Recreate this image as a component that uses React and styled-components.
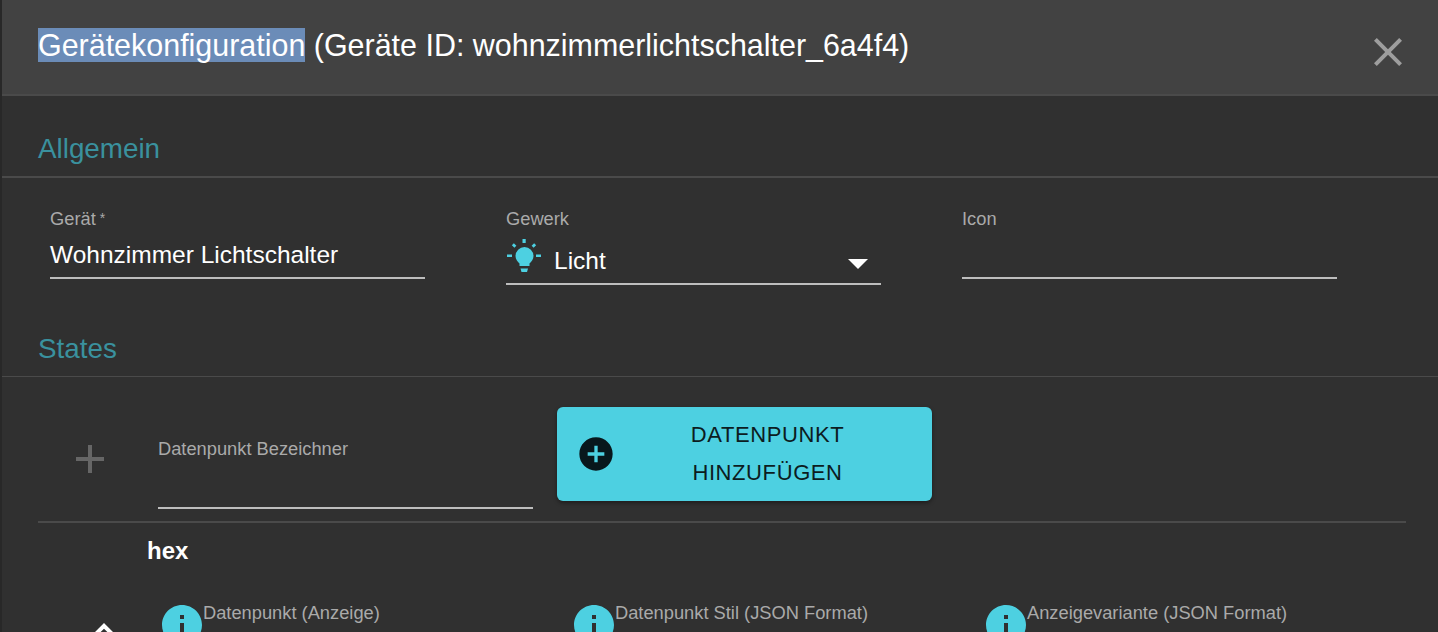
import React from "react";
import styled, { createGlobalStyle } from "styled-components";

const GlobalStyle = createGlobalStyle`
  html, body {
    margin: 0;
    height: 632px;
    overflow: hidden;
    background: #303030;
    font-family: "Liberation Sans", Arial, sans-serif;
  }
`;

const Dialog = styled.div`
  box-sizing: border-box;
  width: 1438px;
  height: 632px;
  overflow: hidden;
  background: #303030;
  border-left: 2px solid #282828;
`;

const Header = styled.header`
  box-sizing: border-box;
  height: 96px;
  display: flex;
  justify-content: space-between;
  align-items: flex-start;
  padding: 28px 26px 0 36px;
  background: #424242;
  border-bottom: 2px solid #4a4a4a;
`;

const Title = styled.h2`
  margin: 0;
  font-size: 30.45px;
  font-weight: 400;
  line-height: 34px;
  color: #fff;
  white-space: nowrap;
`;

const Selected = styled.span`
  background: #6b8cb8;
`;

const CloseIcon = styled.svg`
  width: 48px;
  height: 48px;
  fill: #9e9e9e;
`;

const SectionTitle = styled.h3`
  margin: 0;
  padding: 36px 36px 10px;
  font-size: 27.8px;
  font-weight: 400;
  line-height: 34px;
  color: #3a919e;
  border-bottom: ${(props) => (props.$thin ? "1px" : "2px")} solid #4a4a4a;
`;

const FieldRow = styled.div`
  display: grid;
  grid-template-columns: repeat(3, 375px);
  column-gap: 81px;
  align-items: start;
  padding: 31px 0 11px 48px;
`;

const Field = styled.div`
  width: 375px;
`;

const Label = styled.label`
  display: block;
  font-size: 18.3px;
  line-height: 20px;
  color: #aaa;
  white-space: nowrap;
`;

const Required = styled.span`
  margin-left: 4px;
  font-size: 14px;
  line-height: 0;
  vertical-align: 2px;
`;

const Input = styled.div`
  box-sizing: content-box;
  height: 48px;
  font-size: 24.5px;
  line-height: 52px;
  color: #fff;
  border-bottom: 2px solid #bdbdbd;
`;

const Select = styled.div`
  box-sizing: border-box;
  display: flex;
  align-items: flex-start;
  height: 56px;
  padding-top: 10px;
  border-bottom: 2px solid #bdbdbd;
`;

const SelectValue = styled.span`
  margin-left: 12px;
  font-size: 24.5px;
  line-height: 44px;
  color: #fff;
`;

const BulbIcon = styled.svg`
  flex-shrink: 0;
  width: 36px;
  height: 36px;
  margin-top: -1px;
  fill: #4dd0e1;
`;

const ArrowIcon = styled.svg`
  width: 48px;
  height: 48px;
  margin-left: auto;
  margin-right: -1px;
  fill: #fff;
`;

const AddRow = styled.div`
  display: flex;
  align-items: flex-start;
  padding: 30px 0 12px 64px;
`;

const AddIcon = styled.svg`
  flex-shrink: 0;
  width: 48px;
  height: 48px;
  margin: 28px 44px 0 0;
  fill: #666;
`;

const AddField = styled(Field)`
  margin-top: 32px;
`;

const AddButton = styled.button`
  position: relative;
  display: flex;
  align-items: center;
  width: 375px;
  height: 94px;
  margin-left: 24px;
  padding: 0 13px 0 19px;
  border: 0;
  border-radius: 6px;
  background: #4dd0e1;
  box-shadow: 0 2px 4px rgba(0, 0, 0, 0.4);
  color: #0c1c21;
  font-family: inherit;
  font-size: 22px;
  letter-spacing: 0.6px;
  line-height: 38px;
`;

const ButtonIcon = styled.svg`
  flex-shrink: 0;
  width: 40px;
  height: 40px;
  fill: #08171c;
`;

const ButtonText = styled.span`
  flex: 1;
  text-align: center;
`;

const Divider = styled.hr`
  margin: 0 32px 0 36px;
  border: 0;
  border-top: 2px solid #4a4a4a;
`;

const StateName = styled.div`
  padding: 14px 0 0 145px;
  font-size: 24px;
  font-weight: 700;
  line-height: 28px;
  color: #fff;
`;

const StateRow = styled.div`
  display: flex;
  align-items: flex-start;
  padding: 36px 0 0 78px;
`;

const CollapseIcon = styled.svg`
  flex-shrink: 0;
  width: 48px;
  height: 48px;
  margin: 6px 30px 0 0;
  fill: #fff;
`;

const StateField = styled.div`
  display: flex;
  align-items: flex-start;
  width: 412px;
`;

const InfoIcon = styled.svg`
  flex-shrink: 0;
  width: 48px;
  height: 48px;
  fill: #4dd0e1;
`;

const StateLabel = styled(Label)`
  margin: 2px 0 0 -3px;
`;

const stateFields = [
  "Datenpunkt (Anzeige)",
  "Datenpunkt Stil (JSON Format)",
  "Anzeigevariante (JSON Format)",
];

const App = () => {
  return (
    <Dialog>
      <GlobalStyle />
      <Header>
        <Title>
          <Selected>Gerätekonfiguration</Selected> (Geräte ID: wohnzimmerlichtschalter_6a4f4)
        </Title>
        <CloseIcon viewBox="0 0 24 24">
          <path d="M19 6.41 17.59 5 12 10.59 6.41 5 5 6.41 10.59 12 5 17.59 6.41 19 12 13.41 17.59 19 19 17.59 13.41 12z" />
        </CloseIcon>
      </Header>

      <SectionTitle>Allgemein</SectionTitle>
      <FieldRow>
        <Field>
          <Label>
            Gerät<Required>*</Required>
          </Label>
          <Input>Wohnzimmer Lichtschalter</Input>
        </Field>
        <Field>
          <Label>Gewerk</Label>
          <Select>
            <BulbIcon viewBox="0 0 36 36">
              <path d="M18.500 9a9 9 0 0 0-9 9c0 3.500 2 5.500 4 7.500v2.500h10v-2.500c2-2 4-4 4-7.500a9 9 0 0 0-9-9z" />
              <path d="M14.500 30.500h7.500l-1 3.500h-5.500z" />
              <rect x="16.500" y="1" width="3.200" height="4" />
              <rect x="1" y="16.500" width="5" height="2.500" />
              <rect x="30" y="16.500" width="5" height="2.500" />
              <path d="M5.900 7.300 7.900 5.200l2.500 2.500-2 2.100z" />
              <path d="M30.100 7.300 28.100 5.200l-2.500 2.500 2 2.100z" />
            </BulbIcon>
            <SelectValue>Licht</SelectValue>
            <ArrowIcon viewBox="0 0 24 24">
              <path d="M7 10l5 5 5-5z" />
            </ArrowIcon>
          </Select>
        </Field>
        <Field>
          <Label>Icon</Label>
          <Input />
        </Field>
      </FieldRow>

      <SectionTitle $thin>States</SectionTitle>
      <AddRow>
        <AddIcon viewBox="0 0 24 24">
          <path d="M19 13h-6v6h-2v-6H5v-2h6V5h2v6h6v2z" />
        </AddIcon>
        <AddField>
          <Label>Datenpunkt Bezeichner</Label>
          <Input />
        </AddField>
        <AddButton>
          <ButtonIcon viewBox="0 0 24 24">
            <path d="M12 2C6.480 2 2 6.480 2 12s4.480 10 10 10 10-4.480 10-10S17.520 2 12 2zm5 11h-4v4h-2v-4H7v-2h4V7h2v4h4v2z" />
          </ButtonIcon>
          <ButtonText>
            DATENPUNKT
            <br />
            HINZUFÜGEN
          </ButtonText>
        </AddButton>
      </AddRow>
      <Divider />

      <StateName>hex</StateName>
      <StateRow>
        <CollapseIcon viewBox="0 0 24 24">
          <path d="M12 8l-6 6 1.410 1.410L12 10.830l4.590 4.580L18 14z" />
        </CollapseIcon>
        {stateFields.map((name) => (
          <StateField key={name}>
            <InfoIcon viewBox="0 0 24 24">
              <path d="M12 2C6.480 2 2 6.480 2 12s4.480 10 10 10 10-4.480 10-10S17.520 2 12 2zm1 15h-2v-6h2v6zm0-8h-2V7h2v2z" />
            </InfoIcon>
            <StateLabel>{name}</StateLabel>
          </StateField>
        ))}
      </StateRow>
    </Dialog>
  );
};

export default App;
